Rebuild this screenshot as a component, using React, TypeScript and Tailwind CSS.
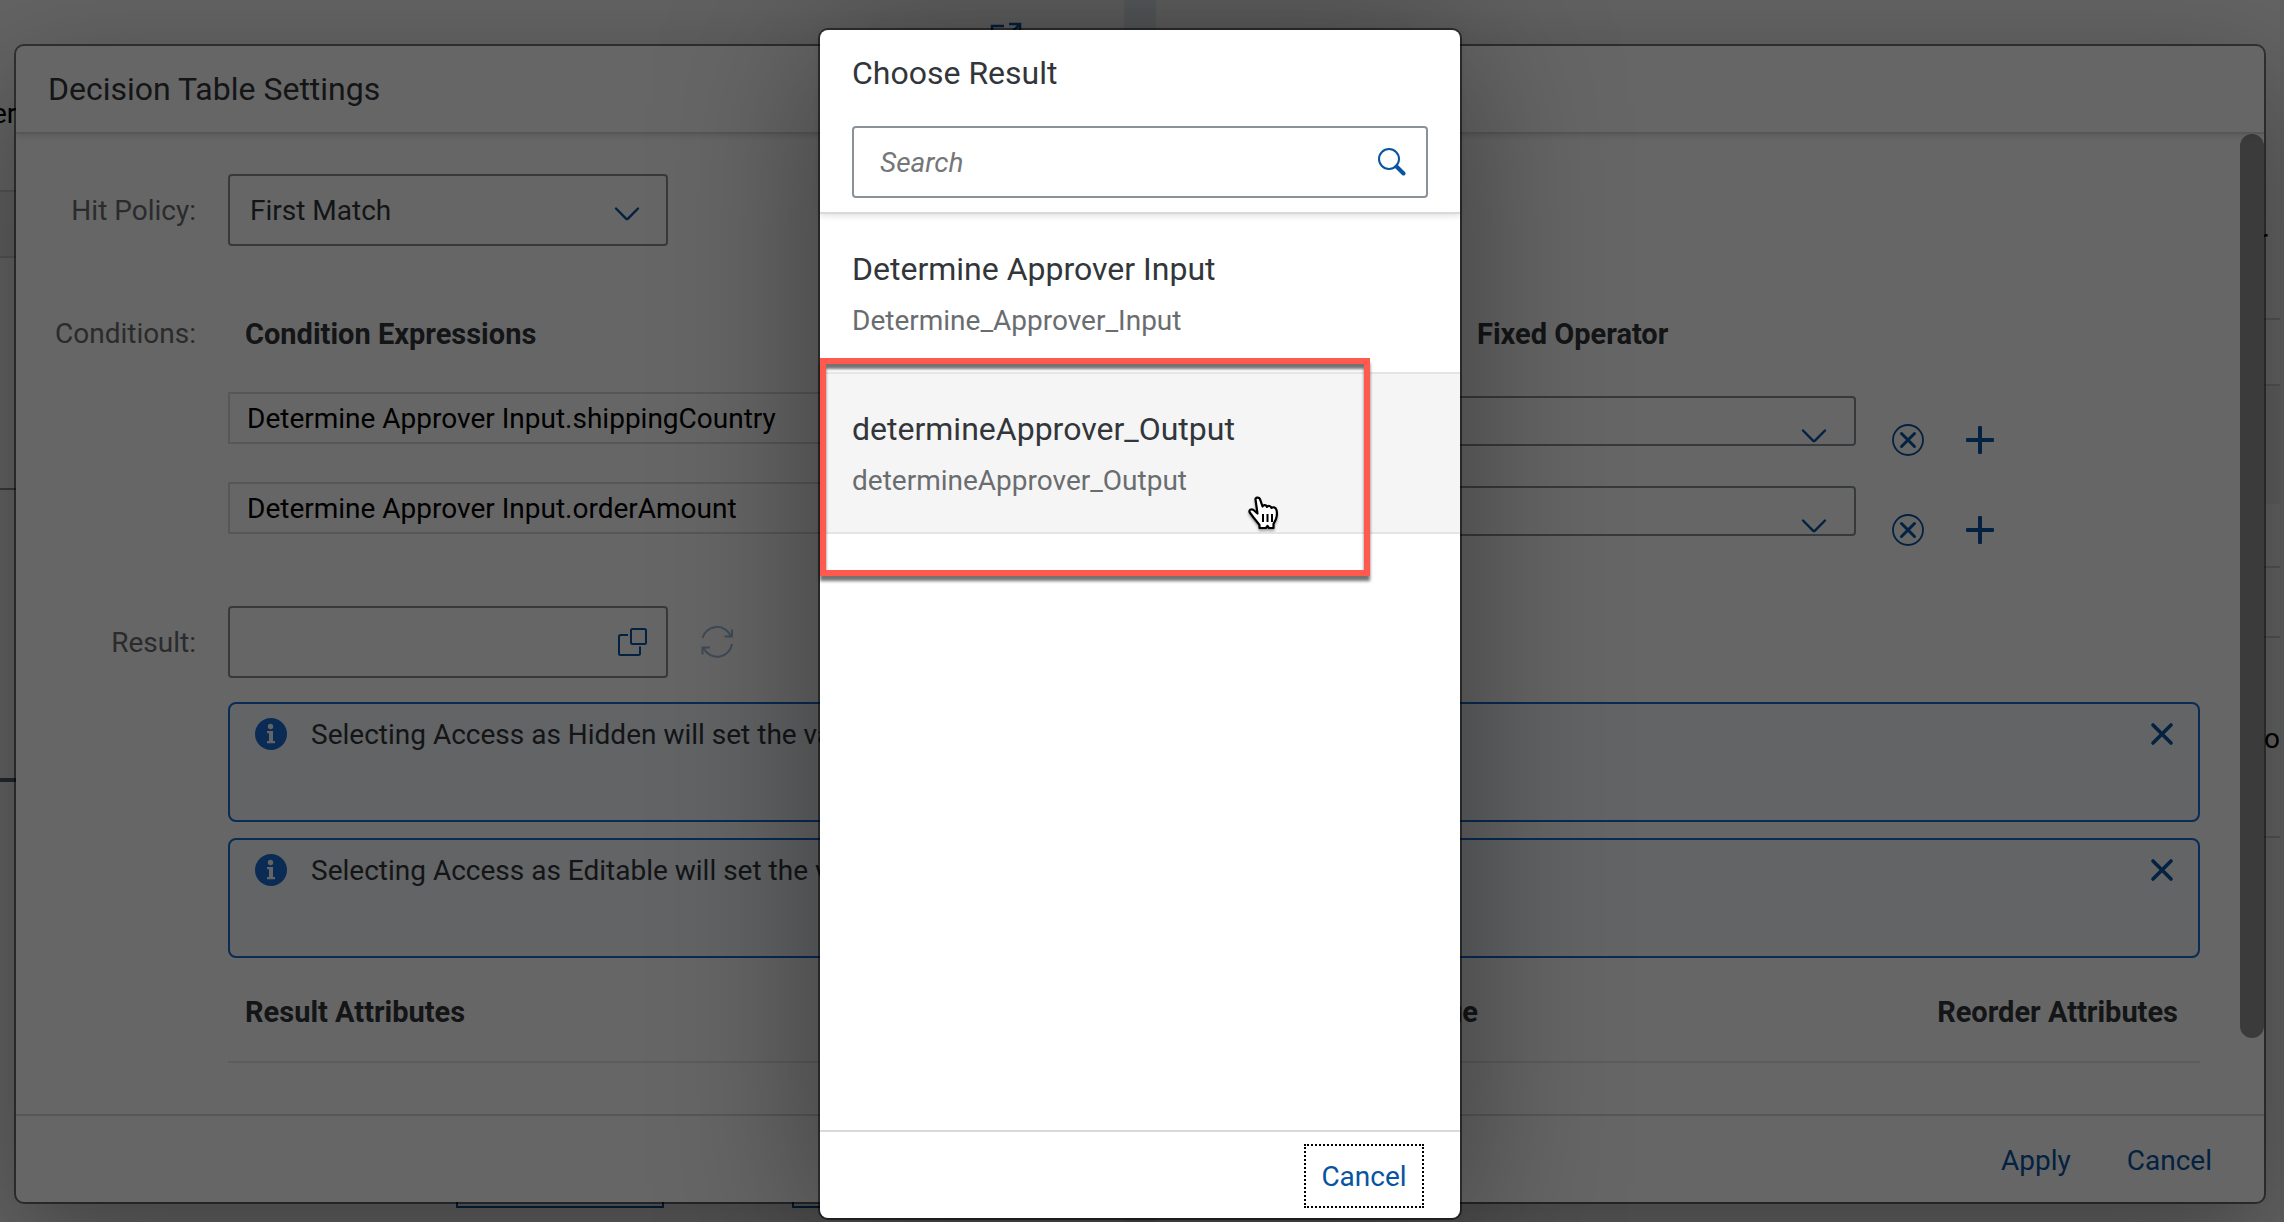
import React from "react";

type IconProps = { className?: string };

const ChevronIcon = ({ className = "" }: IconProps) => (
  <svg viewBox="0 0 28 16" className={`h-4 w-7 ${className}`} fill="none" stroke="currentColor" strokeWidth="2.4" strokeLinecap="round" strokeLinejoin="round" aria-hidden="true">
    <path d="M3 2.5 13 12.6Q14 13.6 15 12.6L25 2.5" />
  </svg>
);

const ValueHelpIcon = () => (
  <svg viewBox="0 0 32 32" className="size-8" fill="none" stroke="currentColor" strokeWidth="2" strokeLinecap="butt" strokeLinejoin="round" aria-hidden="true">
    <rect x="15" y="3" width="15" height="15" rx="1.5" />
    <path d="M12 9H4.500Q3 9 3 10.500V27.500Q3 29 4.500 29H22.500Q24 29 24 27.500V20.500" />
  </svg>
);

const RefreshIcon = () => (
  <svg viewBox="0 0 34 34" className="h-[34px] w-[34px]" fill="none" stroke="currentColor" strokeWidth="2" strokeLinejoin="miter" aria-hidden="true">
    <path d="M2.500 13A15 15 0 0 1 31 11.500M24.500 11.500H32V4.500" />
    <path d="M32 19A15 15 0 0 1 3.500 23M10 22.500H2.500V29.500" />
  </svg>
);

const DeclineIcon = () => (
  <svg viewBox="0 0 32 32" className="size-8" fill="none" stroke="currentColor" strokeLinecap="round" aria-hidden="true">
    <circle cx="16" cy="16" r="15" strokeWidth="1.8" />
    <path d="M9.500 9.500 22.500 22.500M22.500 9.500 9.500 22.500" strokeWidth="3" />
  </svg>
);

const AddIcon = () => (
  <svg viewBox="0 0 28 28" className="size-7" fill="currentColor" aria-hidden="true">
    <rect x="0" y="12" width="28" height="4" rx="1" />
    <rect x="12" y="0" width="4" height="28" rx="1" />
  </svg>
);

const InfoIcon = () => (
  <svg viewBox="0 0 32 32" className="size-8 shrink-0 text-[#186cd3]" aria-hidden="true">
    <circle cx="16" cy="16" r="16" fill="currentColor" />
    <circle cx="15.500" cy="8.500" r="2.700" fill="#f5faff" />
    <path d="M12 13H18V23H20V25.200H12V23H14V15.200H12Z" fill="#f5faff" />
  </svg>
);

const CloseIcon = () => (
  <svg viewBox="0 0 24 24" className="size-6" fill="none" stroke="currentColor" strokeWidth="3.600" strokeLinecap="round" aria-hidden="true">
    <path d="M3 3 21 21M21 3 3 21" />
  </svg>
);

const SearchIcon = () => (
  <svg viewBox="0 0 28 28" className="size-7" fill="none" stroke="currentColor" aria-hidden="true">
    <circle cx="11" cy="11" r="10" strokeWidth="2" />
    <path d="M18.500 18.500 25.500 25.500" strokeWidth="4" strokeLinecap="round" />
  </svg>
);

const OpenIcon = () => (
  <svg viewBox="0 0 32 32" className="size-8" fill="none" stroke="currentColor" strokeWidth="2.500" aria-hidden="true">
    <path d="M14 4H2V30H28V18M19 2H30V13M30 2 16 16" />
  </svg>
);

const HandCursor = () => (
  <svg viewBox="0 0 32 34" className="absolute left-[428px] top-[282px] h-[34px] w-8 drop-shadow-[0_2px_1px_rgba(0,0,0,0.35)]" aria-hidden="true">
    <path
      d="M7.500 3.500C7 1.500 11 .8 12 3.200L14.500 10.500C15.500 8.500 18.500 8.800 19 11C20 9.300 23 9.700 23.500 12C24.500 10.800 27.500 11 28.300 13.500C29.500 17 29 20 28 23L25.500 28V32H21L19.500 30L18 32H11.500V29L5.500 21.500L1.800 16.500C.5 14 3.500 12.300 5.500 14L9.500 17.500Z"
      fill="#fff"
      stroke="#000"
      strokeWidth="2.200"
      strokeLinejoin="round"
    />
    <path d="M15 18V26M19.500 18V26M24 18V26" stroke="#000" strokeWidth="2" />
  </svg>
);

function Backdrop() {
  return (
    <div className="flex h-full w-full bg-[#edeff0] pr-1 text-[28px] leading-10 text-black" aria-hidden="true">
      <div className="flex flex-1 flex-col bg-[#f7f7f7]">
        <div className="relative h-[192px] border-b-2 border-[#d0d0d0] pt-[94px]">
          <span className="-ml-2">er</span>
          <span className="absolute right-[102px] top-[22px] text-[#0854a0]">
            <OpenIcon />
          </span>
        </div>
        <div className="h-[66px] border-b-2 border-[#d0d0d0] bg-[#ececec]" />
        <div className="h-[232px] border-b-2 border-[#89919a]" />
        <div className="h-[292px] border-b-4 border-[#5b646c]" />
        <div className="flex flex-1 items-end justify-end gap-32 pb-[14px] pr-[132px]">
          <div className="h-16 w-52 border-2 border-[#0854a0]" />
          <div className="h-16 w-50 border-2 border-[#0854a0]" />
        </div>
      </div>
      <div className="w-8 bg-[#dfe7ec]" />
      <div className="flex flex-1 flex-col bg-[#f7f7f7] text-right">
        <div className="h-[320px] border-b-2 border-[#d0d0d0] pr-3 pt-[220px]">r</div>
        <div className="h-[66px] border-b-2 border-[#d0d0d0]" />
        <div className="h-[118px] bg-[#ececec]" />
        <div className="h-16 border-b-2 border-[#d0d0d0]" />
        <div className="h-[70px] border-b-2 border-[#d0d0d0]" />
        <div className="h-[200px] border-b-2 border-[#d0d0d0] pt-[81px]">yo</div>
      </div>
    </div>
  );
}

function ConditionRow({ id, value }: { id: string; value: string }) {
  return (
    <div className="grid h-[90px] grid-cols-[1222px_406px_1fr] items-start">
      <input
        aria-label="Condition expression"
        defaultValue={value}
        className="h-[52px] border-2 border-[#d9d9d9] bg-white px-[17px] text-black outline-none"
      />
      <div className="relative mt-1">
        <select
          id={id}
          aria-label="Fixed operator"
          className="block h-[50px] w-full appearance-none rounded border-2 border-[#89919a] bg-white"
        />
        <ChevronIcon className="pointer-events-none absolute right-7 top-8 text-[#0854a0]" />
      </div>
      <div className="mt-4 flex h-16 items-center gap-[42px] pl-9 text-[#0854a0]">
        <button type="button" aria-label="Remove condition">
          <DeclineIcon />
        </button>
        <button type="button" aria-label="Add condition">
          <AddIcon />
        </button>
      </div>
    </div>
  );
}

function InfoStrip({ text }: { text: string }) {
  return (
    <div className="flex h-[120px] items-start justify-between rounded-lg border-2 border-[#186cd3] bg-[#f5faff] pl-[25px] pr-6 pt-[10px]">
      <div className="flex h-10 items-center gap-6 whitespace-nowrap">
        <InfoIcon />
        <p className="pt-0.5">{text}</p>
      </div>
      <button type="button" aria-label="Close message" className="flex h-10 items-center text-[#0854a0]">
        <CloseIcon />
      </button>
    </div>
  );
}

function SettingsDialog() {
  return (
    <section
      aria-label="Decision Table Settings"
      className="flex h-full flex-col overflow-hidden rounded-lg bg-white text-[28px] leading-10 text-[#32363a] shadow-[0_0_0_2px_rgba(0,0,0,0.5),0_40px_120px_0_rgba(0,0,0,0.35)]"
    >
      <header className="relative flex h-[88px] shrink-0 items-center border-b-2 border-[#d9d9d9] px-8 shadow-[0_2px_6px_rgba(0,0,0,0.12)]">
        <h1 className="text-[32px]">Decision Table Settings</h1>
      </header>

      <div className="flex min-h-0 flex-1 justify-between">
        <div className="min-w-0 flex-1 pr-10 pt-10">
          <div className="grid grid-cols-[180px_1fr] gap-x-8">
            <label htmlFor="hit-policy" className="flex h-[72px] items-center justify-end pt-0.5 text-[#6a6d70]">
              Hit Policy:
            </label>
            <div className="relative w-[440px]">
              <select
                id="hit-policy"
                className="h-[72px] w-full appearance-none rounded border-2 border-[#89919a] bg-white px-5 pt-0.5"
              >
                <option>First Match</option>
              </select>
              <ChevronIcon className="pointer-events-none absolute right-[27px] top-8 text-[#0854a0]" />
            </div>

            <span className="mt-[68px] text-right text-[#6a6d70]">Conditions:</span>
            <div className="mt-[68px]">
              <div className="mb-[38px] grid grid-cols-[1232px_1fr] pl-[17px] text-[29px] font-bold">
                <span>Condition Expressions</span>
                <span>Fixed Operator</span>
              </div>
              <ConditionRow id="operator-country" value="Determine Approver Input.shippingCountry" />
              <ConditionRow id="operator-amount" value="Determine Approver Input.orderAmount" />
            </div>

            <label htmlFor="result" className="mt-[34px] flex h-[72px] items-center justify-end pt-0.5 text-[#6a6d70]">
              Result:
            </label>
            <div className="mt-[34px] flex items-center gap-8">
              <div className="flex h-[72px] w-[440px] items-center rounded border-2 border-[#89919a] bg-white pr-[18px]">
                <input id="result" className="min-w-0 flex-1 bg-transparent px-5 outline-none" />
                <button type="button" aria-label="Choose result" className="text-[#0854a0]">
                  <ValueHelpIcon />
                </button>
              </div>
              <button type="button" aria-label="Refresh result" disabled className="text-[#9cbbd9]">
                <RefreshIcon />
              </button>
            </div>

            <div className="col-start-2 mt-6 flex flex-col gap-4">
              <InfoStrip text="Selecting Access as Hidden will set the value" />
              <InfoStrip text="Selecting Access as Editable will set the value" />
            </div>

            <table className="col-start-2 w-full table-fixed text-[29px]">
              <thead>
                <tr className="h-[104px] border-b-2 border-[#e5e5e5]">
                  <th className="w-1/2 pl-[17px] pt-1 text-left">Result Attributes</th>
                  <th className="w-[264px] pt-1 text-right">Value</th>
                  <th className="pr-[22px] pt-1 text-right">Reorder Attributes</th>
                </tr>
              </thead>
            </table>
          </div>
        </div>
        <div className="flex w-6 shrink-0 flex-col">
          <div className="h-[904px] rounded-xl bg-[#949494]" />
        </div>
      </div>

      <footer className="flex h-[88px] shrink-0 items-center justify-end gap-14 border-t-2 border-[#d9d9d9] px-[52px] pt-1 text-[#0854a0]">
        <button type="button">Apply</button>
        <button type="button">Cancel</button>
      </footer>
    </section>
  );
}

const results = [
  { title: "Determine Approver Input", name: "Determine_Approver_Input", active: false },
  { title: "determineApprover_Output", name: "determineApprover_Output", active: true },
];

function ChooseResultDialog() {
  return (
    <section
      aria-label="Choose Result"
      className="mx-auto flex h-full w-[640px] flex-col rounded-lg bg-white text-[28px] leading-10 text-[#32363a] shadow-[0_0_0_2px_rgba(0,0,0,0.5),0_20px_160px_0_rgba(0,0,0,0.42)]"
    >
      <header className="shrink-0 border-b-2 border-[#d9d9d9] px-8 pb-[14px] pt-[23px] shadow-[0_2px_6px_rgba(0,0,0,0.12)]">
        <h2 className="text-[32px]">Choose Result</h2>
        <div className="mt-[33px] flex h-[72px] items-center rounded border-2 border-[#89919a] pr-5">
          <input
            type="text"
            aria-label="Search"
            placeholder="Search"
            className="min-w-0 flex-1 bg-transparent pl-[26px] pt-0.5 outline-none placeholder:italic placeholder:text-[#74777a]"
          />
          <button type="button" aria-label="Start search" className="text-[#0854a0]">
            <SearchIcon />
          </button>
        </div>
      </header>

      <div className="relative flex-1">
        <ul>
          {results.map((item) => (
            <li key={item.name} className="border-b-2 border-[#e5e5e5]">
              <button
                type="button"
                className={`block h-[158px] w-full px-8 text-left ${item.active ? "bg-[#f5f5f5]" : "bg-transparent"}`}
              >
                <span className="block pb-3 pt-[3px] text-[32px]">{item.title}</span>
                <span className="block text-[#6a6d70]">{item.name}</span>
              </button>
            </li>
          ))}
        </ul>
        <div className="pointer-events-none absolute left-0 top-36 h-[218px] w-[550px] border-6 border-[#ff5a4d] shadow-[0_5px_3px_0_rgba(0,0,0,0.55),inset_0_5px_3px_0_rgba(0,0,0,0.55)]" />
        <HandCursor />
      </div>

      <footer className="flex h-[88px] shrink-0 items-center justify-end border-t-2 border-[#d9d9d9] px-9 pt-0.5">
        <button
          type="button"
          className="h-16 w-30 border-2 border-dotted border-black pt-0.5 text-center text-[#0854a0] outline-none"
        >
          Cancel
        </button>
      </footer>
    </section>
  );
}

export default function App() {
  return (
    <main className="relative h-screen min-h-[1222px] overflow-hidden font-[Roboto,sans-serif]">
      <Backdrop />
      <div className="absolute inset-0 pb-5 pl-4 pr-5 pt-[46px]">
        <SettingsDialog />
      </div>
      <div className="absolute inset-0 bg-black/60 pb-1 pr-1 pt-[30px]">
        <ChooseResultDialog />
      </div>
    </main>
  );
}
